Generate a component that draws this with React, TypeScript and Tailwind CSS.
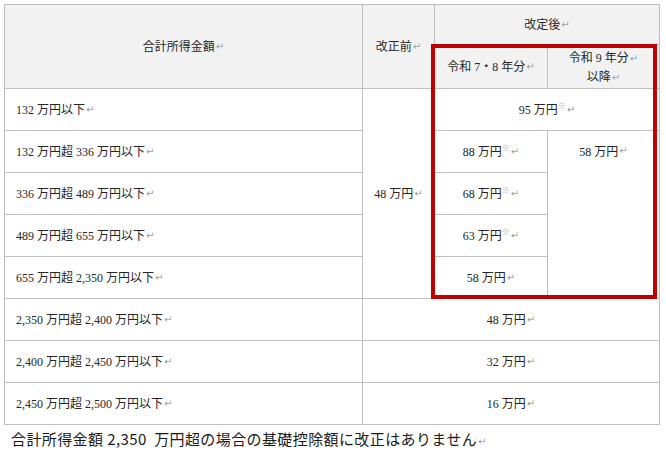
import React from "react";

const R = () => (
  <span className="ml-[1px] text-[10px] text-[#a0a0a0]" style={{ fontFamily: '"DejaVu Sans", sans-serif' }}>↵</span>
);
const K = () => (
  <span className="text-[8px] relative -top-[3px] text-[#aaaaaa]">※</span>
);

const serif = { fontFamily: '"Liberation Serif", "Noto Sans CJK JP", serif' };

export default function App() {
  const hdr = "bg-[#f2f2f2] flex items-center justify-center text-center";
  const cell = "bg-white flex items-center";
  const left = rowsLeft;
  return (
    <div className="w-[666px] h-[453px] bg-white pl-[4px] pt-[4px] text-[#262626] text-[12px]" style={serif}>
      <div className="relative w-[656px]">
        <div className="grid grid-cols-[357px_71px_112px_111px] grid-rows-[39px_43px_repeat(8,41px)] gap-px p-px bg-[#bfbfbf]">
          <div className={`${hdr} row-span-2`}>合計所得金額<R /></div>
          <div className={`${hdr} row-span-2`}>改正前<R /></div>
          <div className={`${hdr} col-span-2`}>改定後<R /></div>
          <div className={hdr}>令和 7・8 年分<R /></div>
          <div className={`${hdr} flex-col leading-[19px] pt-[2px]`}>
            <div>令和 9 年分<R /></div>
            <div>以降<R /></div>
          </div>

          {/* row 1 */}
          <div className={`${cell} pl-[11px]`}>{left[0]}<R /></div>
          <div className={`${cell} row-span-5 justify-center`}>48 万円<R /></div>
          <div className={`${cell} col-span-2 justify-center`}>95 万円<K /><R /></div>

          {/* row 2 */}
          <div className={`${cell} pl-[11px]`}>{left[1]}<R /></div>
          <div className={`${cell} justify-center`}>88 万円<K /><R /></div>
          <div className="bg-white row-span-4 flex justify-center pt-[12px]">58 万円<R /></div>

          {/* row 3 */}
          <div className={`${cell} pl-[11px]`}>{left[2]}<R /></div>
          <div className={`${cell} justify-center`}>68 万円<K /><R /></div>

          {/* row 4 */}
          <div className={`${cell} pl-[11px]`}>{left[3]}<R /></div>
          <div className={`${cell} justify-center`}>63 万円<K /><R /></div>

          {/* row 5 */}
          <div className={`${cell} pl-[11px]`}>{left[4]}<R /></div>
          <div className={`${cell} justify-center`}>58 万円<R /></div>

          {/* rows 6-8 */}
          <div className={`${cell} pl-[11px]`}>{left[5]}<R /></div>
          <div className={`${cell} col-span-3 justify-center`}>48 万円<R /></div>
          <div className={`${cell} pl-[11px]`}>{left[6]}<R /></div>
          <div className={`${cell} col-span-3 justify-center`}>32 万円<R /></div>
          <div className={`${cell} pl-[11px]`}>{left[7]}<R /></div>
          <div className={`${cell} col-span-3 justify-center`}>16 万円<R /></div>
        </div>
        <div className="absolute left-[427px] top-[40px] w-[226px] h-[255px] border-[4px] border-[#c00000] pointer-events-none" />
      </div>
      <div
        className="mt-[4px] pl-[7px] text-[15px] leading-[20px] text-[#1a1a1a] tracking-[0.4px]"
        style={{ fontFamily: '"Noto Sans CJK JP", "Liberation Sans", sans-serif' }}
      >
        合計所得金額 2,350&nbsp; 万円超の場合の基礎控除額に改正はありません<R />
      </div>
    </div>
  );
}

const rowsLeft = [
  "132 万円以下",
  "132 万円超 336 万円以下",
  "336 万円超 489 万円以下",
  "489 万円超 655 万円以下",
  "655 万円超 2,350 万円以下",
  "2,350 万円超 2,400 万円以下",
  "2,400 万円超 2,450 万円以下",
  "2,450 万円超 2,500 万円以下",
];
